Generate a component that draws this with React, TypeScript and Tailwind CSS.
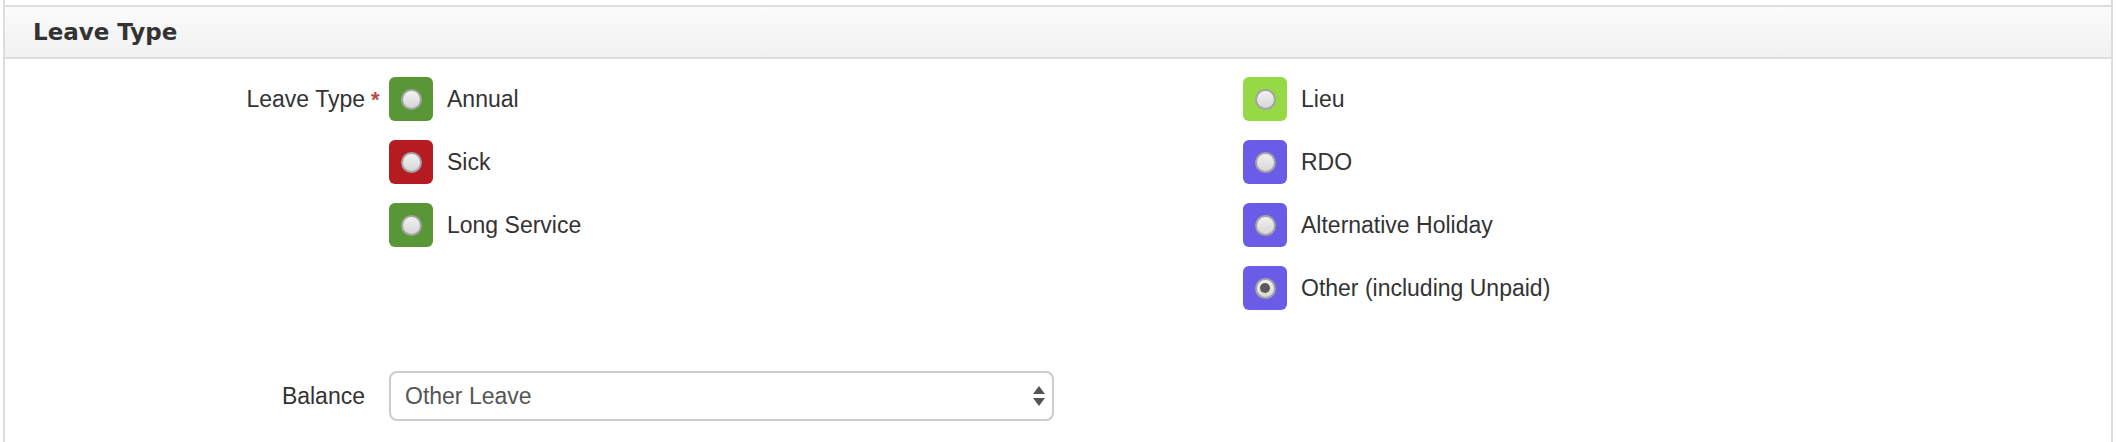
import React from 'react';

interface LeaveOption {
  label: string;
  color: string;
  checked?: boolean;
}

const leftOptions: LeaveOption[] = [
  { label: 'Annual', color: 'bg-[#589636]' },
  { label: 'Sick', color: 'bg-[#b71b22]' },
  { label: 'Long Service', color: 'bg-[#589636]' },
];

const rightOptions: LeaveOption[] = [
  { label: 'Lieu', color: 'bg-[#95d944]' },
  { label: 'RDO', color: 'bg-[#6b5ce8]' },
  { label: 'Alternative Holiday', color: 'bg-[#6b5ce8]' },
  { label: 'Other (including Unpaid)', color: 'bg-[#6b5ce8]', checked: true },
];

const RadioOption = ({ option }: { option: LeaveOption }) => (
  <label className="flex items-center h-[44px]">
    <span className={`w-[44px] h-[44px] rounded-[6px] flex items-center justify-center ${option.color}`}>
      <span className="w-[21px] h-[21px] rounded-full bg-[#a3a3a3] flex items-center justify-center">
        <span className="w-[17px] h-[17px] rounded-full bg-gradient-to-b from-[#f2f2f2] to-[#d6d6d6] flex items-center justify-center">
          {option.checked && <span className="w-[10px] h-[10px] rounded-full bg-[#5a5a5a]" />}
        </span>
      </span>
    </span>
    <span className="ml-[14px] text-[23px] text-[#333]">{option.label}</span>
  </label>
);

const App = () => {
  return (
    <div className="h-[442px] bg-white overflow-hidden" style={{ fontFamily: '"Liberation Sans", Arial, sans-serif' }}>
      <div className="ml-[3px] mr-[4px] h-full border-x-2 border-[#dddddd] pt-[5px]">
        <div className="h-[54px] border-y-2 border-[#dddddd] bg-gradient-to-b from-[#fbfbfb] to-[#f1f1f1] flex items-center pl-[28px]">
          <h2 className="text-[23px] font-bold text-[#333]" style={{ fontFamily: '"DejaVu Sans", Verdana, sans-serif' }}>
            Leave Type
          </h2>
        </div>

        <div className="pt-[18px]">
          <div className="flex items-start">
            <div className="w-[360px] h-[44px] flex items-center justify-end text-[23px] text-[#333]">Leave Type</div>
            <div className="w-[24px] h-[44px] flex items-center pl-[6px] text-[22px] font-bold text-[#b94a48]">*</div>
            <div className="grid grid-cols-[854px_1fr]">
              <div className="flex flex-col gap-[19px]">
                {leftOptions.map((o) => (
                  <RadioOption key={o.label} option={o} />
                ))}
              </div>
              <div className="flex flex-col gap-[19px]">
                {rightOptions.map((o) => (
                  <RadioOption key={o.label} option={o} />
                ))}
              </div>
            </div>
          </div>

          <div className="flex items-center mt-[61px]">
            <div className="w-[360px] text-right text-[23px] text-[#333]">Balance</div>
            <div className="w-[24px]" />
            <div className="w-[665px] h-[50px] border-2 border-[#cccccc] rounded-[8px] flex items-center justify-between pl-[14px] pr-[6px] text-[23px] text-[#555]">
              <span>Other Leave</span>
              <svg width="14" height="22" viewBox="0 0 14 22">
                <polygon points="7,1 13,9 1,9" fill="#555" />
                <polygon points="1,13 13,13 7,21" fill="#555" />
              </svg>
            </div>
          </div>
        </div>
      </div>
    </div>
  );
};

export default App;
